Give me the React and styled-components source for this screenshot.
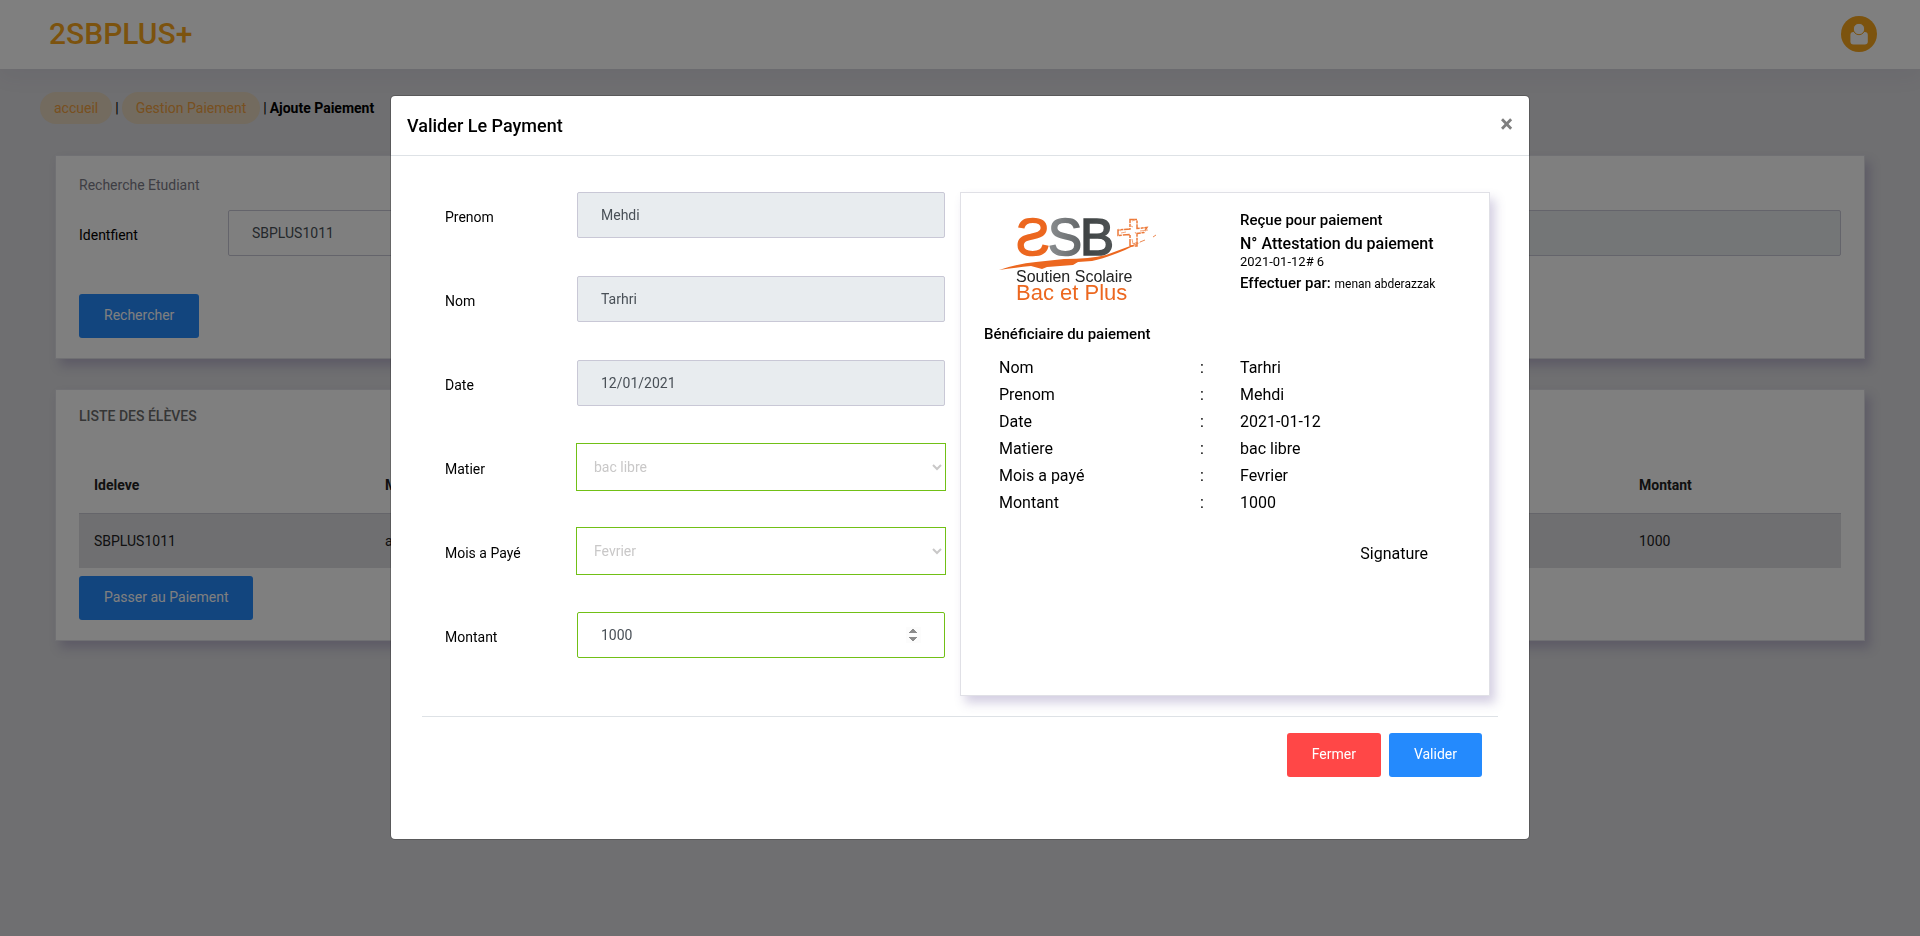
import React, { useEffect, useRef } from "react";
import styled, { createGlobalStyle, css } from "styled-components";

const GlobalStyle = createGlobalStyle`
  *, *::before, *::after { box-sizing: border-box; }
  html, body { min-height: 100vh; }
  body {
    margin: 0;
    background: #dedee2;
    color: #000;
    font-family: Roboto, "Open Sans", sans-serif;
    font-size: 14px;
    line-height: 24px;
  }
  h1, h2, h3, p { margin: 0; }
`;

const TopBar = styled.header`
  display: flex;
  align-items: center;
  justify-content: space-between;
  height: 69px;
  padding: 0 43px 2px 49px;
  background: #fff;
  box-shadow: 0 8px 20px rgba(82, 63, 140, 0.06);
`;

const Brand = styled.a`
  color: #f8a61c;
  font-size: 30px;
  font-weight: 500;
  line-height: 36px;
  text-decoration: none;
`;

const UserButton = styled.button`
  display: flex;
  padding: 0;
  border: 0;
  background: none;
`;

const Breadcrumb = styled.nav`
  display: flex;
  align-items: center;
  gap: 3px;
  padding: 23px 40px 31px;
`;

const Crumb = styled.a`
  padding: 4px 14px;
  border-radius: 16px;
  background: #e6d6be;
  color: #f0a040;
  text-decoration: none;
`;

const Current = styled.strong`
  font-weight: 700;
`;

const Content = styled.main`
  display: flex;
  flex-direction: column;
  gap: 30px;
  padding: 0 55px 40px;
`;

const cardLook = css`
  background: #fff;
  border: 1px solid #e0e0e6;
  box-shadow: 5px 7px 10px rgba(82, 63, 140, 0.25);
`;

const Card = styled.section`
  ${cardLook}
  padding: 17px 23px 20px;
`;

const CardTitle = styled.h2`
  color: ${(p) => (p.$strong ? "#6c6c6c" : "#7c7c88")};
  font-size: 14px;
  font-weight: ${(p) => (p.$strong ? 500 : 400)};
  line-height: ${(p) => (p.$strong ? 18 : 24)}px;
`;

const SearchRow = styled.div`
  display: grid;
  grid-template-columns: 119px 1fr 1fr;
  column-gap: 30px;
  align-items: center;
  margin: 13px 0 38px;
`;

const SearchLabel = styled.label`
  padding-top: 3px;
`;

const Control = styled.input`
  width: 100%;
  height: 46px;
  padding: 0 23px;
  border: 1px solid ${(p) => (p.$valid ? "#71c016" : "#c9c8d6")};
  border-radius: 2px;
  background: ${(p) => (p.disabled ? "#e8ecef" : "#fff")};
  color: #495057;
  font: 14px Roboto, sans-serif;
  outline: none;
  &::-webkit-inner-spin-button { opacity: 1; }
`;

const Picker = styled.select`
  width: 100%;
  height: 46px;
  padding: 0 0 0 13px;
  border: 0;
  outline: 1px solid #71c016;
  background: #fff;
  color: #c9c8c8;
  font: 14px Roboto, sans-serif;
`;

const Button = styled.button`
  height: 44px;
  padding: 0 25px 2px;
  border: 0;
  border-radius: 3px;
  background: ${(p) => (p.$danger ? "#ff4747" : "#248afd")};
  color: #fff;
  font: 400 14px Roboto, sans-serif;
`;

const DataTable = styled.table`
  width: 100%;
  margin: 33px 0 8px;
  border-collapse: collapse;
  table-layout: fixed;
  text-align: left;
  th, td { height: 55px; padding: 0 15px; }
  th { font-weight: 700; color: #222; }
  td { border-top: 1px solid #cbcbd4; background: #dedee2; color: #222; }
`;

const Backdrop = styled.div`
  position: fixed;
  inset: 0;
  overflow: auto;
  padding: 95px 20px 40px;
  background: rgba(0, 0, 0, 0.5);
`;

const Dialog = styled.div`
  max-width: 1140px;
  margin: 0 auto;
  border: 1px solid rgba(0, 0, 0, 0.2);
  border-radius: 5px;
  background: #fff;
  background-clip: padding-box;
`;

const DialogHeader = styled.header`
  display: flex;
  align-items: center;
  justify-content: space-between;
  height: 60px;
  padding: 0 16px;
  border-bottom: 1px solid #dee2e6;
`;

const DialogTitle = styled.h1`
  font-size: 18px;
  font-weight: 500;
  line-height: 24px;
`;

const Close = styled.button`
  padding: 0 0 3px;
  border: 0;
  background: none;
  color: #7f7f7f;
  font: 700 24px/24px Roboto, sans-serif;
`;

const DialogBody = styled.div`
  padding: 36px 31px 62px;
`;

const Columns = styled.div`
  display: grid;
  grid-template-columns: 523px 1fr;
  gap: 15px;
  padding: 0 8px 20px 0;
  border-bottom: 1px solid #dee2e6;
`;

const Fields = styled.form`
  padding-left: 23px;
`;

const Field = styled.div`
  display: grid;
  grid-template-columns: 132px 1fr;
  height: 84px;
  align-items: start;
`;

const FieldLabel = styled.label`
  padding-top: 13px;
`;

const Receipt = styled.section`
  ${cardLook}
  padding: 15px 23px;
`;

const ReceiptTop = styled.div`
  display: grid;
  grid-template-columns: 256px 1fr;
  height: 114px;
`;

const ReceiptHead = styled.h2`
  font-size: ${(p) => (p.$large ? 16 : 15)}px;
  font-weight: 500;
  line-height: 24px;
`;

const Small = styled.p`
  font-size: 13px;
  line-height: 12px;
`;

const Author = styled.span`
  font-size: 12px;
  font-weight: 400;
`;

const Issuer = styled(ReceiptHead)`
  margin-top: 3px;
`;

const Details = styled.table`
  margin: 8px 0 0 15px;
  border-collapse: collapse;
  font-size: 16px;
  line-height: 27px;
  text-align: left;
  th, td { padding: 0; font-weight: 400; }
  th { width: 201px; }
  td:nth-child(2) { width: 40px; }
`;

const Signature = styled.p`
  padding: 24px 38px 0 0;
  font-size: 16px;
  line-height: 27px;
  text-align: right;
`;

const Actions = styled.footer`
  display: flex;
  justify-content: flex-end;
  gap: 8px;
  padding: 16px 16px 0;
`;

const LogoBox = styled.svg`
  display: block;
  margin: 5px 0 0 10px;
`;

function UserIcon() {
  return (
    <svg width="36" height="36" viewBox="0 0 36 36" aria-hidden="true">
      <circle cx="18" cy="18" r="18" fill="#f8a61c" />
      <rect x="9.4" y="16" width="17.4" height="12.6" rx="3" fill="#fff" />
      <circle cx="18" cy="13" r="5.7" fill="#fff" stroke="#f8a61c" strokeWidth="1" />
    </svg>
  );
}

function Logo() {
  return (
    <LogoBox width="170" height="95" viewBox="0 0 170 95" role="img" aria-label="2SB+ Soutien Scolaire Bac et Plus">
      <defs>
        <linearGradient id="grey" x1="0" x2="1">
          <stop offset="0" stopColor="#8b8e90" />
          <stop offset="1" stopColor="#626668" />
        </linearGradient>
        <linearGradient id="dark" x1="0" x2="1">
          <stop offset="0" stopColor="#3c4041" />
          <stop offset="1" stopColor="#505556" />
        </linearGradient>
      </defs>
      <g fontFamily="Liberation Sans, Arial, sans-serif" fontSize="51" strokeWidth="1.6">
        <text transform="translate(56 42) scale(-1 1)" fill="#ec671f" stroke="#ec671f">S</text>
        <text x="54" y="42" fill="url(#grey)" stroke="url(#grey)">S</text>
        <text x="86" y="42" fill="url(#dark)" stroke="url(#dark)">B</text>
      </g>
      <path
        d="M136 6.500h7v9l10-1-3 5-7 1V33h-7V21.500l-12 1V17l12-1z"
        fill="none" stroke="#ec7a3a" strokeWidth="1.500" strokeDasharray="7 1 3 .7"
      />
      <path d="M138 8l3-1M137 13l2 1M127 20l5-1M146 18l8-1M138 26l1 5M141 19l2 3M124 16l3 2" stroke="#f3a77e" strokeWidth="1" />
      <path
        d="M5 57Q22 51 42 49L70 46Q96 46 112 42L147 29 131 37Q112 45 98 48L84 49 79 52 53 54 48 56 37 53Q17 55 5 57z"
        fill="#ec671f"
      />
      <path d="M146 29l5-2M159 24l3-2M139 31l5-2" stroke="#ec8a55" strokeWidth="1" />
      <g fontFamily="Liberation Sans, Arial, sans-serif">
        <text x="22" y="69" fontSize="16" fill="#222">Soutien Scolaire</text>
        <text x="22" y="87" fontSize="22" fill="#ec671f">Bac et Plus</text>
      </g>
    </LogoBox>
  );
}

const details = [
  ["Nom", "Tarhri"],
  ["Prenom", "Mehdi"],
  ["Date", "2021-01-12"],
  ["Matiere", "bac libre"],
  ["Mois a payé", "Fevrier"],
  ["Montant", "1000"],
];

function Page() {
  return (
    <>
      <TopBar>
        <Brand href="#">2SBPLUS+</Brand>
        <UserButton type="button" aria-label="Mon compte"><UserIcon /></UserButton>
      </TopBar>
      <Breadcrumb>
        <Crumb href="#accueil">accueil</Crumb>
        <span>|</span>
        <Crumb href="#paiement">Gestion Paiement</Crumb>
        <span>|</span>
        <Current>Ajoute Paiement</Current>
      </Breadcrumb>
      <Content>
        <Card>
          <CardTitle>Recherche Etudiant</CardTitle>
          <SearchRow>
            <SearchLabel htmlFor="identifiant">Identfient</SearchLabel>
            <Control id="identifiant" defaultValue="SBPLUS1011" />
            <Control disabled aria-label="Etudiant" />
          </SearchRow>
          <Button type="button">Rechercher</Button>
        </Card>
        <Card>
          <CardTitle $strong>LISTE DES ÉLÈVES</CardTitle>
          <DataTable>
            <colgroup>
              <col width="291" /><col /><col /><col /><col width="217" />
            </colgroup>
            <thead>
              <tr><th>Ideleve</th><th>Matiere</th><th>Mois</th><th>Date</th><th>Montant</th></tr>
            </thead>
            <tbody>
              <tr><td>SBPLUS1011</td><td>arabe</td><td>Janvier</td><td>2021-01-12</td><td>1000</td></tr>
            </tbody>
          </DataTable>
          <Button type="button">Passer au Paiement</Button>
        </Card>
      </Content>
    </>
  );
}

function PaymentDialog() {
  const amount = useRef(null);
  useEffect(() => { amount.current.focus(); }, []);
  return (
    <Backdrop>
      <Dialog role="dialog" aria-modal="true" aria-labelledby="dialog-title">
        <DialogHeader>
          <DialogTitle id="dialog-title">Valider Le Payment</DialogTitle>
          <Close type="button" aria-label="Fermer la fenêtre">×</Close>
        </DialogHeader>
        <DialogBody>
          <Columns>
            <Fields id="payment">
              <Field>
                <FieldLabel htmlFor="prenom">Prenom</FieldLabel>
                <Control id="prenom" defaultValue="Mehdi" disabled />
              </Field>
              <Field>
                <FieldLabel htmlFor="nom">Nom</FieldLabel>
                <Control id="nom" defaultValue="Tarhri" disabled />
              </Field>
              <Field>
                <FieldLabel htmlFor="date">Date</FieldLabel>
                <Control id="date" defaultValue="12/01/2021" disabled />
              </Field>
              <Field>
                <FieldLabel htmlFor="matier">Matier</FieldLabel>
                <Picker id="matier"><option>bac libre</option></Picker>
              </Field>
              <Field>
                <FieldLabel htmlFor="mois">Mois a Payé</FieldLabel>
                <Picker id="mois"><option>Fevrier</option></Picker>
              </Field>
              <Field>
                <FieldLabel htmlFor="montant">Montant</FieldLabel>
                <Control id="montant" type="number" defaultValue="1000" $valid ref={amount} />
              </Field>
            </Fields>
            <Receipt>
              <ReceiptTop>
                <Logo />
                <div>
                  <ReceiptHead>Reçue pour paiement</ReceiptHead>
                  <ReceiptHead $large>N° Attestation du paiement</ReceiptHead>
                  <Small>2021-01-12# 6</Small>
                  <Issuer>Effectuer par: <Author>menan abderazzak</Author></Issuer>
                </div>
              </ReceiptTop>
              <ReceiptHead>Bénéficiaire du paiement</ReceiptHead>
              <Details>
                <tbody>
                  {details.map(([name, value]) => (
                    <tr key={name}><th scope="row">{name}</th><td>:</td><td>{value}</td></tr>
                  ))}
                </tbody>
              </Details>
              <Signature>Signature</Signature>
            </Receipt>
          </Columns>
          <Actions>
            <Button type="button" $danger>Fermer</Button>
            <Button type="submit" form="payment">Valider</Button>
          </Actions>
        </DialogBody>
      </Dialog>
    </Backdrop>
  );
}

export default function App() {
  return (
    <>
      <GlobalStyle />
      <Page />
      <PaymentDialog />
    </>
  );
}
